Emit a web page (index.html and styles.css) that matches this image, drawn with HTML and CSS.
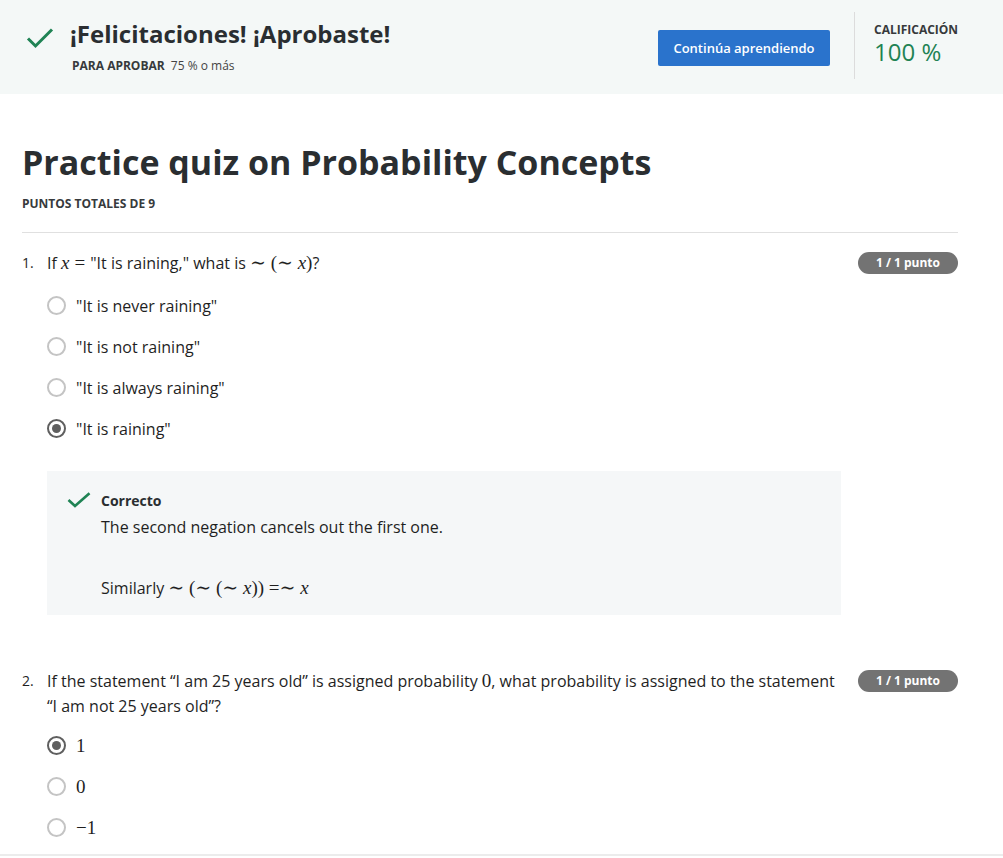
FILE: index.html
```html
<!DOCTYPE html>
<html lang="es">
<head>
<meta charset="utf-8">
<title>Practice quiz on Probability Concepts</title>
<link rel="stylesheet" href="styles.css">
</head>
<body>
<div class="page">
  <header class="banner">
    <svg class="banner-check" width="28" height="22" viewBox="0 0 28 22"><path d="M2 11.5 L9.5 19 L26 2.5" fill="none" stroke="#1f8354" stroke-width="3"/></svg>
    <div class="banner-text">
      <h2 class="banner-title">¡Felicitaciones! ¡Aprobaste!</h2>
      <div class="banner-sub"><span class="label">PARA APROBAR</span> 75 % o más</div>
    </div>
    <button class="btn-primary">Continúa aprendiendo</button>
    <div class="grade">
      <div class="label">CALIFICACIÓN</div>
      <div class="grade-value">100 %</div>
    </div>
  </header>

  <main class="content">
    <h1 class="quiz-title">Practice quiz on Probability Concepts</h1>
    <div class="label total">PUNTOS TOTALES DE 9</div>
    <hr class="divider">

    <section class="question">
      <div class="q-head">
        <span class="q-num">1.</span>
        <div class="q-text">If <span class="m i">x</span><span class="m rel">=</span>"It is raining," what is <span class="m">∼ (∼ <span class="i">x</span>)</span>?</div>
        <span class="badge">1 / 1 punto</span>
      </div>
      <ul class="options">
        <li><span class="radio"></span>"It is never raining"</li>
        <li><span class="radio"></span>"It is not raining"</li>
        <li><span class="radio"></span>"It is always raining"</li>
        <li><span class="radio checked"></span>"It is raining"</li>
      </ul>
      <div class="feedback">
        <svg class="fb-check" width="24" height="16" viewBox="0 0 24 16"><path d="M1.5 8 L8 14 L22.5 1.2" fill="none" stroke="#1f8354" stroke-width="2.6"/></svg>
        <div class="fb-body">
          <div class="fb-title">Correcto</div>
          <p>The second negation cancels out the first one.</p>
          <p class="fb-gap">Similarly <span class="m">∼ (∼ (∼ <span class="i">x</span>)) =∼ <span class="i">x</span></span></p>
        </div>
      </div>
    </section>

    <section class="question q2">
      <div class="q-head">
        <span class="q-num">2.</span>
        <div class="q-text">If the statement “I am 25 years old” is assigned probability <span class="m">0</span>, what probability is assigned to the statement “I am not 25 years old”?</div>
        <span class="badge">1 / 1 punto</span>
      </div>
      <ul class="options">
        <li><span class="radio checked"></span><span class="m">1</span></li>
        <li><span class="radio"></span><span class="m">0</span></li>
        <li><span class="radio"></span><span class="m">−1</span></li>
      </ul>
    </section>
  </main>
</div>
</body>
</html>
```
FILE: styles.css
```css
* { box-sizing: border-box; }
html, body { margin: 0; padding: 0; }
body {
  font-family: "Open Sans", "Noto Sans", sans-serif;
  color: #1f1f1f;
  background: #fff;
  height: 858px;
  overflow: hidden;
}
.page {
  height: 856px;
  border-bottom: 2px solid #ececec;
  overflow: hidden;
}
.label {
  font-size: 12px;
  font-weight: 700;
  color: #373a3c;
  letter-spacing: 0;
}
.banner {
  display: flex;
  align-items: flex-start;
  height: 94px;
  background: #f4f8f7;
  padding: 0 45px 0 26px;
}
.banner-check { margin-top: 27px; flex: none; }
.banner-text { flex: 1; margin-left: 16px; padding-top: 17px; }
.banner-title {
  margin: 0;
  font-size: 24px;
  line-height: 34px;
  font-weight: 700;
  color: #2a2e31;
}
.banner-sub {
  margin-top: 6px;
  margin-left: 2px;
  font-size: 12px;
  color: #444;
}
.banner-sub .label { margin-right: 3px; }
.btn-primary {
  margin-top: 30px;
  width: 172px;
  height: 36px;
  background: #2a73cc;
  color: #fff;
  border: none;
  border-radius: 2px;
  font-family: "Open Sans", sans-serif;
  font-size: 13px;
  font-weight: 600;
  padding: 0;
}
.grade {
  margin-top: 12px;
  margin-left: 24px;
  height: 67px;
  border-left: 1px solid #dcdcdc;
  padding: 9px 0 0 19px;
  width: 104px;
}
.grade .label { line-height: 17px; }
.grade-value {
  font-size: 24px;
  line-height: 28px;
  color: #1f8354;
  font-weight: 400;
}
.content { padding: 0 45px 0 22px; }
.quiz-title {
  margin: 46px 0 0;
  font-size: 34px;
  line-height: 44px;
  font-weight: 700;
  color: #2a2e31;
}
.total { margin-top: 12px; line-height: 16px; }
.divider {
  border: none;
  border-top: 1px solid #e0e0e0;
  margin: 20px 0 0;
}
.question { margin-top: 18px; }
.q2 { margin-top: 54px; }
.q-head { display: flex; align-items: flex-start; }
.q-num { width: 25px; font-size: 14px; line-height: 24px; flex: none; }
.q-text { flex: 1; font-size: 16px; line-height: 25px; color: #1f1f1f; padding-right: 20px; }
.badge {
  flex: none;
  margin-top: 1px;
  width: 100px;
  height: 22px;
  border-radius: 11px;
  background: #737373;
  color: #fff;
  font-size: 12px;
  font-weight: 700;
  line-height: 22px;
  text-align: center;
}
.m {
  font-family: "Liberation Serif", "DejaVu Serif", serif;
  font-size: 19px;
  line-height: 1;
}
.i { font-style: italic; }
.rel { margin: 0 5px; }
.options {
  list-style: none;
  margin: 9px 0 0 25px;
  padding: 0;
}
.q2 .options { margin-top: 6px; }
.options li {
  display: flex;
  align-items: center;
  height: 41px;
  font-size: 16px;
  color: #1f1f1f;
}
.radio {
  width: 19px;
  height: 19px;
  border: 2px solid #c4c4c4;
  border-radius: 50%;
  margin-right: 10px;
  flex: none;
  position: relative;
}
.radio.checked { border-color: #5f5f5f; }
.radio.checked::after {
  content: "";
  position: absolute;
  left: 3px; top: 3px;
  width: 9px; height: 9px;
  border-radius: 50%;
  background: #5f5f5f;
}
.feedback {
  display: flex;
  margin: 22px 117px 0 25px;
  background: #f5f7f8;
  padding: 20px 20px 14px 20px;
  min-height: 143px;
}
.fb-check { flex: none; margin-top: 1px; margin-right: 10px; }
.fb-title { font-size: 14px; font-weight: 700; line-height: 20px; color: #2a2e31; }
.fb-body p { margin: 4px 0 0; font-size: 16px; line-height: 25px; }
.fb-body p.fb-gap { margin-top: 36px; }
```
